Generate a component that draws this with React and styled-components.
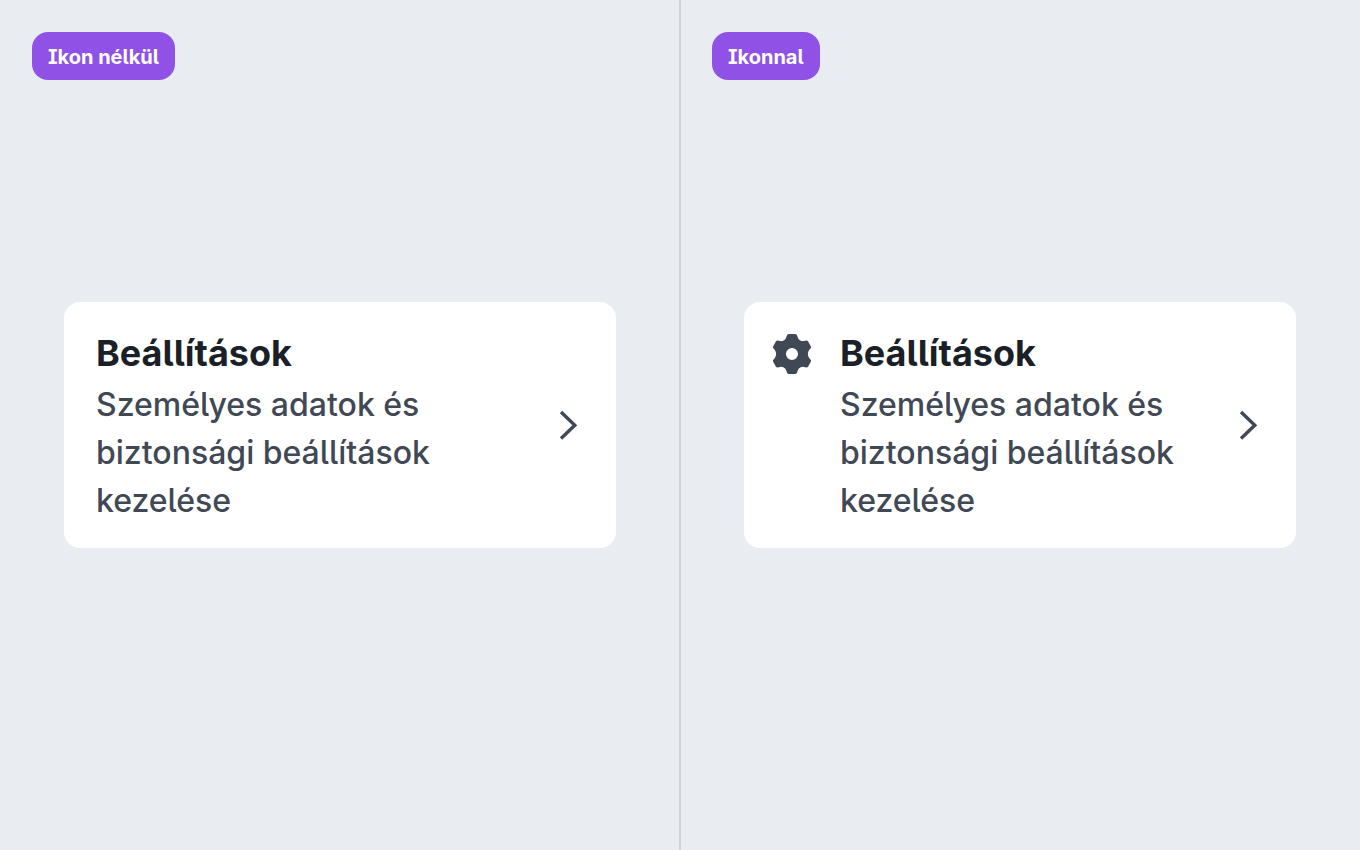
import React from 'react';
import styled, { createGlobalStyle } from 'styled-components';

const color = {
  page: '#e9ecf1',
  line: '#d0d5dc',
  badge: '#8f51e6',
  card: '#ffffff',
  title: '#1b1f27',
  text: '#414855',
};

const GlobalStyle = createGlobalStyle`
  * {
    box-sizing: border-box;
  }

  body {
    margin: 0;
    background: ${color.page};
    font-family: Inter, 'Liberation Sans', sans-serif;
    font-feature-settings: 'ss02', 'cv05', 'cv08';
    -webkit-font-smoothing: antialiased;
  }
`;

const Board = styled.main`
  display: grid;
  grid-template-columns: 1fr 1fr;
  min-height: 100vh;
`;

const Panel = styled.section`
  display: grid;
  grid-template-rows: 1fr auto 1fr;
  padding: 32px 31px 32px 32px;
  border-right: 1px solid ${color.line};

  & + & {
    padding: 32px 32px 32px 31px;
    border-right: 0;
    border-left: 1px solid ${color.line};
  }
`;

const Badge = styled.h2`
  align-self: start;
  justify-self: start;
  margin: 0;
  padding: 10px 16px 8px;
  border-radius: 16px;
  background: ${color.badge};
  color: #fff;
  font-size: 20px;
  font-weight: 700;
  line-height: 30px;
`;

const Card = styled.a`
  display: flex;
  align-items: center;
  gap: 24px;
  margin: 0 32px;
  padding: 24px 24px 23px;
  padding-left: ${({ $hasIcon }) => ($hasIcon ? '24px' : '32px')};
  border-radius: 16px;
  background: ${color.card};
  color: ${color.text};
  text-decoration: none;

  svg {
    flex: none;
    width: 48px;
    height: 48px;
  }
`;

const Leading = styled.span`
  display: flex;
  align-self: flex-start;
  padding-top: 4px;
`;

const Content = styled.div`
  flex: 1;
  min-width: 0;
`;

const Title = styled.h3`
  margin: 0;
  color: ${color.title};
  font-size: 36px;
  font-weight: 700;
  line-height: 55px;
`;

const Description = styled.p`
  margin: 0;
  font-size: 32px;
  font-weight: 500;
  line-height: 48px;
`;

const ChevronIcon = () => (
  <svg viewBox="0 0 48 48" fill="none" stroke="currentColor" strokeWidth="3.4" aria-hidden="true">
    <path d="M17 10L30.8 23.200L17 36.400" />
  </svg>
);

const GearIcon = () => (
  <svg viewBox="0 0 48 48" fill="currentColor" aria-hidden="true">
    <path
      fillRule="evenodd"
      d="M21 4H27Q28.800 4 29.300 6C30 9.500 32.500 11.800 36 11L38.300 10.500Q39.300 10.300 40 11.300L42.800 16.200Q43.400 17.500 42.500 18.500L41.500 19.600C39.300 22.300 39.300 25.700 41.500 28.400L42.500 29.500Q43.400 30.500 42.800 31.800L40 36.700Q39.300 37.700 38.300 37.500L36 37C32.500 36.200 30 38.500 29.300 42Q28.800 44 27 44H21Q19.200 44 18.700 42C18 38.500 15.500 36.200 12 37L9.700 37.500Q8.700 37.700 8 36.700L5.200 31.800Q4.600 30.500 5.500 29.500L6.500 28.400C8.700 25.700 8.700 22.300 6.500 19.600L5.500 18.500Q4.600 17.500 5.200 16.200L8 11.300Q8.700 10.300 9.700 10.500L12 11C15.500 11.800 18 9.500 18.700 6Q19.200 4 21 4ZM24 18A6 6 0 1 0 24 30A6 6 0 1 0 24 18Z"
    />
  </svg>
);

const LinkCard = ({ icon }) => (
  <Card href="#" $hasIcon={Boolean(icon)}>
    {icon && <Leading>{icon}</Leading>}
    <Content>
      <Title>Beállítások</Title>
      <Description>Személyes adatok és biztonsági beállítások kezelése</Description>
    </Content>
    <ChevronIcon />
  </Card>
);

const App = () => {
  return (
    <>
      <GlobalStyle />
      <Board>
        <Panel>
          <Badge>Ikon nélkül</Badge>
          <LinkCard />
        </Panel>
        <Panel>
          <Badge>Ikonnal</Badge>
          <LinkCard icon={<GearIcon />} />
        </Panel>
      </Board>
    </>
  );
};

export default App;
